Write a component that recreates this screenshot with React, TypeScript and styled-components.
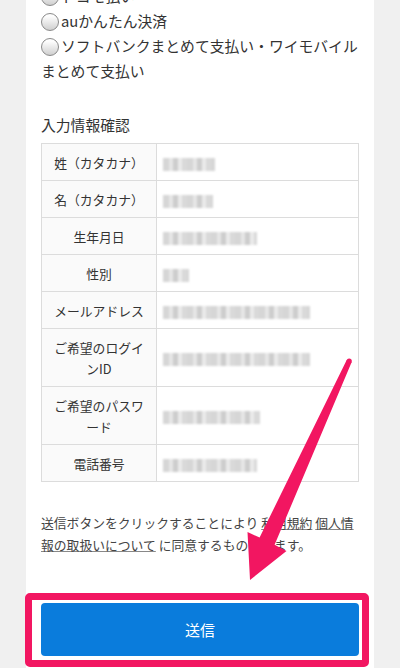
import styled, { createGlobalStyle } from "styled-components";

const GlobalStyle = createGlobalStyle`
  html, body {
    margin: 0;
    padding: 0;
  }
  body {
    background: #f0f0f0;
    font-family: "Noto Sans CJK JP", "Noto Sans", sans-serif;
    color: #333;
    overflow: hidden;
  }
`;

const Page = styled.div`
  position: relative;
  width: 400px;
  height: 668px;
  overflow: hidden;
`;

const Panel = styled.main`
  margin: -17px 26px 0;
  padding: 0 15px 40px;
  background: #fff;
`;

const PayList = styled.ul`
  list-style: none;
  margin: 0;
  padding: 0;
  font-size: 14.8px;
  line-height: 25px;
`;

const Radio = styled.span`
  display: inline-block;
  box-sizing: border-box;
  width: 18px;
  height: 18px;
  margin-right: 2px;
  border: 1px solid #8a8a8a;
  border-radius: 50%;
  background: linear-gradient(#fdfdfd 15%, #cfcfcf);
  vertical-align: -4px;
`;

const SectionTitle = styled.h2`
  margin: 29px 0 6px;
  font-size: 14.8px;
  font-weight: normal;
  line-height: 25px;
`;

const InfoTable = styled.table`
  width: 100%;
  border-collapse: collapse;
  font-size: 12.8px;
  line-height: 21px;
`;

const Label = styled.th`
  width: 94px;
  padding: 7.5px 10px;
  border: 1px solid #dcdcdc;
  background: #fafafa;
  font-weight: normal;
  text-align: center;
  line-break: loose;
`;

const Value = styled.td`
  padding: 7.5px 8px;
  border: 1px solid #dcdcdc;
  background: #fff;
`;

/* 値はモザイク処理されている */
const Blur = styled.span<{ $w: number }>`
  display: inline-block;
  width: ${(p) => p.$w}px;
  height: 13px;
  margin-left: -2px;
  vertical-align: middle;
  background: repeating-linear-gradient(
    90deg,
    #d6d6d6 0 6px,
    #e6e6e6 6px 10px,
    #cdcdcd 10px 15px,
    #ebebeb 15px 19px,
    #d9d9d9 19px 24px
  );
  filter: blur(1px);
`;

const Agreement = styled.p`
  margin: 30px 0 0;
  font-size: 12.8px;
  line-height: 22px;
  color: #444;

  a {
    color: #444;
    text-decoration: underline;
    text-decoration-color: #888;
  }
`;

const SubmitArea = styled.div`
  position: relative;
  margin-top: 47px;
`;

const SubmitButton = styled.button`
  display: block;
  width: 100%;
  height: 53px;
  border: none;
  border-radius: 4px;
  background: #0a7cdc;
  color: #fff;
  font-family: inherit;
  font-size: 15px;
`;

const Highlight = styled.span`
  position: absolute;
  left: -16px;
  top: -10px;
  right: -10px;
  bottom: -11px;
  border: 7px solid #f21661;
  border-radius: 5px;
  pointer-events: none;
`;

const ArrowLayer = styled.svg`
  position: absolute;
  left: 0;
  top: 0;
  pointer-events: none;
`;

const rows: { label: string; w: number }[] = [
  { label: "姓（カタカナ）", w: 52 },
  { label: "名（カタカナ）", w: 50 },
  { label: "生年月日", w: 94 },
  { label: "性別", w: 26 },
  { label: "メールアドレス", w: 147 },
  { label: "ご希望のログインID", w: 147 },
  { label: "ご希望のパスワード", w: 97 },
  { label: "電話番号", w: 94 },
];

export default function App() {
  return (
    <Page>
      <GlobalStyle />
      <Panel>
        <PayList>
          <li>
            <Radio />
            ドコモ払い
          </li>
          <li>
            <Radio />
            auかんたん決済
          </li>
          <li>
            <Radio />
            ソフトバンクまとめて支払い・ワイモバイルまとめて支払い
          </li>
        </PayList>

        <SectionTitle>入力情報確認</SectionTitle>
        <InfoTable>
          <tbody>
            {rows.map((r) => (
              <tr key={r.label}>
                <Label>{r.label}</Label>
                <Value>
                  <Blur $w={r.w} />
                </Value>
              </tr>
            ))}
          </tbody>
        </InfoTable>

        <Agreement>
          送信ボタンをクリックすることにより <a href="#">利用規約</a>{" "}
          <a href="#">個人情報の取扱いについて</a> に同意するものとします。
        </Agreement>

        <SubmitArea>
          <SubmitButton type="button">送信</SubmitButton>
          <Highlight />
        </SubmitArea>
      </Panel>

      <ArrowLayer width="400" height="668" viewBox="0 0 400 668">
        <path
          d="M346.7 360 L351.6 362.2 L274.6 544.8 L286.5 551 L250 580 L247.5 532 L259.6 537.6 Z"
          fill="#f21661"
        />
        <circle cx="349.2" cy="361" r="2.6" fill="#f21661" />
      </ArrowLayer>
    </Page>
  );
}
